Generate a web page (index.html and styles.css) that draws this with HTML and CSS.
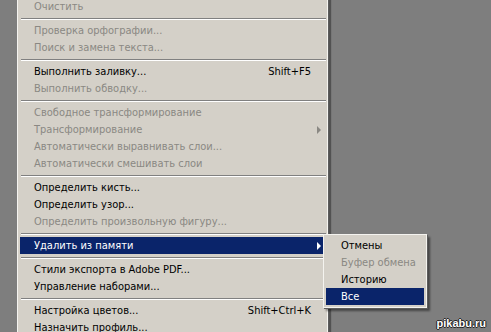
FILE: index.html
```html
<!DOCTYPE html>
<html lang="ru">
<head>
<meta charset="utf-8">
<title>Menu</title>
<link rel="stylesheet" href="styles.css">
</head>
<body>
<div class="screen">
  <div class="menu">
    <div class="item dis"><span class="label">Очистить</span></div>
    <div class="sep"></div>
    <div class="item dis"><span class="label">Проверка орфографии...</span></div>
    <div class="item dis"><span class="label">Поиск и замена текста...</span></div>
    <div class="sep"></div>
    <div class="item"><span class="label">Выполнить заливку...</span><span class="key">Shift+F5</span></div>
    <div class="item dis"><span class="label">Выполнить обводку...</span></div>
    <div class="sep"></div>
    <div class="item dis"><span class="label">Свободное трансформирование</span></div>
    <div class="item dis"><span class="label">Трансформирование</span><span class="arrow"></span></div>
    <div class="item dis"><span class="label">Автоматически выравнивать слои...</span></div>
    <div class="item dis"><span class="label">Автоматически смешивать слои</span></div>
    <div class="sep"></div>
    <div class="item"><span class="label">Определить кисть...</span></div>
    <div class="item"><span class="label">Определить узор...</span></div>
    <div class="item dis"><span class="label">Определить произвольную фигуру...</span></div>
    <div class="sep"></div>
    <div class="item sel"><span class="label">Удалить из памяти</span><span class="arrow"></span></div>
    <div class="sep"></div>
    <div class="item"><span class="label">Стили экспорта в Adobe PDF...</span></div>
    <div class="item"><span class="label">Управление наборами...</span></div>
    <div class="sep"></div>
    <div class="item"><span class="label">Настройка цветов...</span><span class="key">Shift+Ctrl+K</span></div>
    <div class="item"><span class="label">Назначить профиль...</span></div>
  </div>
  <div class="submenu">
    <div class="item sub"><span class="label">Отмены</span></div>
    <div class="item sub dis"><span class="label">Буфер обмена</span></div>
    <div class="item sub"><span class="label">Историю</span></div>
    <div class="item sub sel"><span class="label">Все</span></div>
  </div>
  <div class="wm">pikabu.ru</div>
</div>
</body>
</html>
```
FILE: styles.css
```css
html, body {
  margin: 0;
  padding: 0;
  background: #7e7e7e;
}
.screen {
  position: relative;
  width: 491px;
  height: 332px;
  overflow: hidden;
  background: #7e7e7e;
  font-family: "DejaVu Sans Condensed", "DejaVu Sans", sans-serif;
  font-size: 11px;
}
.menu {
  margin: -3px 0 0 17px;
  width: 305px;
  background: #d4d0c8;
  border: 1px solid #f4f3ef;
  padding: 0 2px;
  display: flex;
  flex-direction: column;
  box-shadow: 1px 0 0 #5c5c5c, 3px 2px 1px rgba(0,0,0,0.35);
}
.item {
  height: 17px;
  display: flex;
  align-items: center;
  padding: 0 14px;
  color: #000;
  white-space: nowrap;
}
.item .label {
  flex: 1;
}
.item.dis {
  color: #8a8883;
}
.item.sel {
  background: #0a246a;
  color: #fff;
}
.key {
  margin-left: 12px;
}
.arrow {
  width: 0;
  height: 0;
  border-top: 4px solid transparent;
  border-bottom: 4px solid transparent;
  border-left: 4px solid #8a8883;
  margin-right: -10px;
}
.sel .arrow {
  border-left-color: #fff;
}
.sep {
  height: 7px;
  display: flex;
  flex-direction: column;
  justify-content: center;
  margin: 0 -1px 0 1px;
}
.sep::before {
  content: "";
  display: block;
  height: 1px;
  background: #808080;
}
.sep::after {
  content: "";
  display: block;
  height: 1px;
  background: #ffffff;
}
.submenu {
  position: absolute;
  left: 323px;
  top: 234px;
  width: 98px;
  padding: 2px;
  background: #d4d0c8;
  border: 1px solid #f4f3ef;
  box-shadow: 1px 1px 0 #5c5c5c, 3px 3px 2px rgba(0,0,0,0.45);
}
.item.sub {
  padding: 0 0 0 15px;
}
.wm {
  position: absolute;
  right: 5px;
  bottom: 3px;
  font-family: "Liberation Sans", Arial, sans-serif;
  font-size: 11px;
  font-weight: bold;
  color: #fff;
  text-shadow: 1px 0 0 #222, -1px 0 0 #222, 0 1px 0 #222, 0 -1px 0 #222;
}
```
